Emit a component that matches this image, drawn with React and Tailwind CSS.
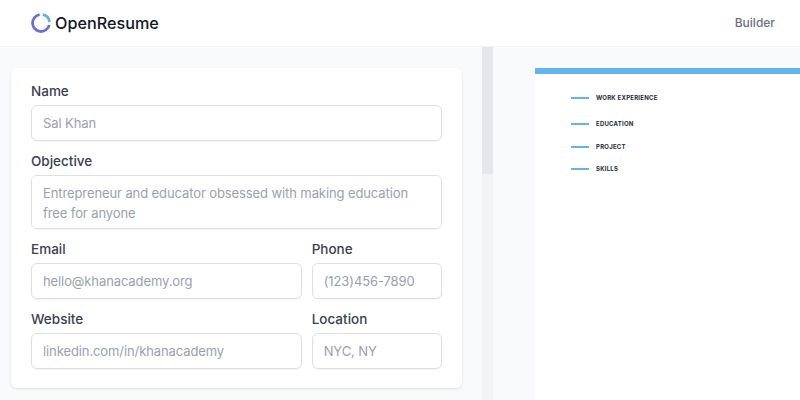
const labelClass = "h-5 text-[13.5px] leading-5 font-medium text-[#374151]";

const Field = ({ label, placeholder, className = "" }) => (
  <label className={`flex flex-col ${className}`}>
    <span className={labelClass}>{label}</span>
    <input
      readOnly
      placeholder={placeholder}
      className="mt-1 h-9 w-full rounded-md border border-[#dcdfe4] bg-white px-[11px] pb-[1px] text-[13px] tracking-[-0.1px] text-gray-900 outline-none placeholder:text-gray-400 shadow-[0_1px_1px_rgba(0,0,0,0.04)]"
    />
  </label>
);

const Logo = () => (
  <svg width="22" height="22" viewBox="0 0 22 22" fill="none">
    <path d="M9.6 2.6A8.5 8.5 0 1 0 19.3 13" stroke="#6a70cf" strokeWidth="2.8" />
    <path d="M12.8 2.7A8.5 8.5 0 0 1 19.5 10" stroke="#5fb4e6" strokeWidth="2.8" />
  </svg>
);

const Section = ({ title, className = "" }) => (
  <div className={`flex h-3 items-center gap-[7px] ${className}`}>
    <div className="h-[2px] w-[18px] bg-[#63b3ed]" />
    <span className="text-[6px] leading-3 font-bold tracking-[0.04em] text-gray-800">{title}</span>
  </div>
);

export default function App() {
  return (
    <div className="flex h-[400px] w-[800px] flex-col overflow-hidden bg-white font-['Inter',sans-serif]">
      <header className="flex h-[47px] shrink-0 items-center justify-between border-b border-gray-100 bg-white pr-[25px] pl-[30px]">
        <div className="flex items-center gap-[3px]">
          <Logo />
          <span className="text-[16.2px] font-medium text-gray-900">OpenResume</span>
        </div>
        <span className="text-[12px] font-medium text-[#6b7280]">Builder</span>
      </header>
      <main className="flex min-h-0 flex-1 bg-gray-50">
        <div className="h-full w-[482px] shrink-0 pt-[21px] pl-[11px]">
          <div className="w-[451px] rounded-md bg-white px-5 pt-[13px] pb-[19px] shadow-[0_1px_3px_rgba(0,0,0,0.1)]">
            <div className="grid grid-cols-6 gap-x-[10px] gap-y-[10px]">
              <Field className="col-span-6" label="Name" placeholder="Sal Khan" />
              <label className="col-span-6 flex flex-col">
                <span className={labelClass}>Objective</span>
                <textarea
                  readOnly
                  rows={2}
                  placeholder="Entrepreneur and educator obsessed with making education free for anyone"
                  className="mt-1 h-[54px] w-full resize-none rounded-md border border-[#dcdfe4] bg-white px-[11px] py-[7px] text-[13px] tracking-[-0.1px] leading-5 outline-none placeholder:text-gray-400 shadow-[0_1px_1px_rgba(0,0,0,0.04)]"
                />
              </label>
              <Field className="col-span-4" label="Email" placeholder="hello@khanacademy.org" />
              <Field className="col-span-2" label="Phone" placeholder="(123)456-7890" />
              <Field className="col-span-4" label="Website" placeholder="linkedin.com/in/khanacademy" />
              <Field className="col-span-2" label="Location" placeholder="NYC, NY" />
            </div>
          </div>
        </div>
        <div className="flex h-full w-[11px] shrink-0 flex-col bg-gray-100">
          <div className="h-[127px] w-full bg-gray-200" />
        </div>
        <div className="min-w-0 flex-1 pt-[21px] pl-[42px]">
          <div className="h-full bg-white">
            <div className="h-[6px] bg-[#63b3ed]" />
            <div className="flex flex-col pt-[18px] pl-[36px]">
              <Section title="WORK EXPERIENCE" />
              <Section title="EDUCATION" className="mt-[14px]" />
              <Section title="PROJECT" className="mt-[11px]" />
              <Section title="SKILLS" className="mt-[10px]" />
            </div>
          </div>
        </div>
      </main>
    </div>
  );
}
